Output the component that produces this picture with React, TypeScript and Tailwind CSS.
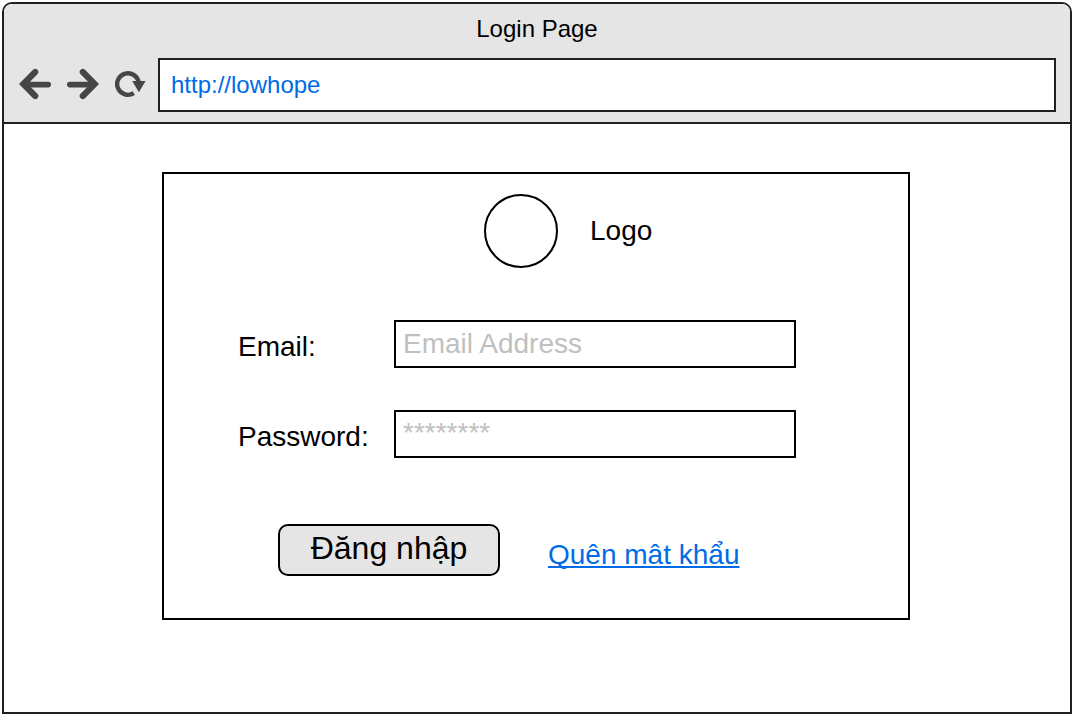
import React from "react";

function BackIcon() {
  return (
    <svg width="32" height="32" viewBox="0 0 32 32" className="block" fill="none" stroke="#464646" strokeLinecap="round" aria-hidden="true">
      <path d="M16.2 4L4.3 16L16.2 28" strokeWidth="6.2" strokeLinejoin="miter" />
      <path d="M6 16.6H29.2" strokeWidth="5.6" />
    </svg>
  );
}

function ForwardIcon() {
  return (
    <svg width="32" height="32" viewBox="0 0 32 32" className="block" fill="none" stroke="#464646" strokeLinecap="round" aria-hidden="true">
      <path d="M15.8 4L27.7 16L15.8 28" strokeWidth="6.2" strokeLinejoin="miter" />
      <path d="M2.8 16.6H26" strokeWidth="5.6" />
    </svg>
  );
}

function ReloadIcon() {
  return (
    <svg width="32" height="32" viewBox="0 0 32 32" className="block" aria-hidden="true">
      <path d="M23.7 14.8A10.8 10.8 0 1 0 18.8 25.1" fill="none" stroke="#464646" strokeWidth="4.4" />
      <path d="M17.2 13.1H30.6L23.9 24.2Z" fill="#464646" />
    </svg>
  );
}

interface FieldProps {
  label: string;
  children: React.ReactNode;
}

function Field({ label, children }: FieldProps) {
  return (
    <div className="flex h-12">
      <span className="w-[156px] pt-[9px] leading-9">{label}</span>
      <div className="h-12 w-[402px] border-2 border-black pl-[7px] text-[#c0c0c0]">{children}</div>
    </div>
  );
}

export default function App() {
  return (
    <div className="h-[716px] w-[1073px] bg-white pt-0.5 pl-0.5 font-['Liberation_Sans',Arial,sans-serif] text-black">
      <div className="flex h-[712px] w-[1070px] flex-col overflow-hidden rounded-t-[10px] border-2 border-[#231f20]">
        <header className="h-[120px] shrink-0 border-b-2 border-[#231f20] bg-[#e5e5e5] pt-[9px]">
          <h1 className="text-center text-2xl leading-8">Login Page</h1>
          <div className="mt-[13px] flex items-center pr-[14px] pl-[15px]">
            <nav className="flex w-[139px] gap-4 pb-0.5">
              <BackIcon />
              <ForwardIcon />
              <ReloadIcon />
            </nav>
            <div className="h-[54px] flex-1 border-2 border-[#231f20] bg-white pl-[11px] text-2xl leading-[50px] text-[#006be6]">
              http://lowhope
            </div>
          </div>
        </header>
        <main className="flex flex-1 justify-center pt-12">
          <section className="mr-[2px] h-[448px] w-[748px] border-2 border-black text-[28px]">
            <div className="mt-5 ml-80 flex items-center gap-8">
              <div className="size-[74px] rounded-full border-2 border-black" />
              <span className="leading-9">Logo</span>
            </div>
            <div className="mt-[52px] ml-[74px] flex flex-col gap-[42px]">
              <Field label="Email:">
                <span className="block leading-[44px]">Email Address</span>
              </Field>
              <Field label="Password:">
                <span className="block leading-[42px]">********</span>
              </Field>
            </div>
            <div className="mt-[66px] ml-[114px] flex items-start gap-12">
              <button className="h-[52px] w-[222px] rounded-[10px] border-2 border-black bg-[#e5e5e5] pb-1 text-[32px] leading-[44px]">
                Đăng nhập
              </button>
              <a className="mt-[13px] leading-9 text-[#006be6] underline decoration-2 underline-offset-2 [text-decoration-skip-ink:none]" href="#">
                Quên mât khẩu
              </a>
            </div>
          </section>
        </main>
      </div>
    </div>
  );
}
